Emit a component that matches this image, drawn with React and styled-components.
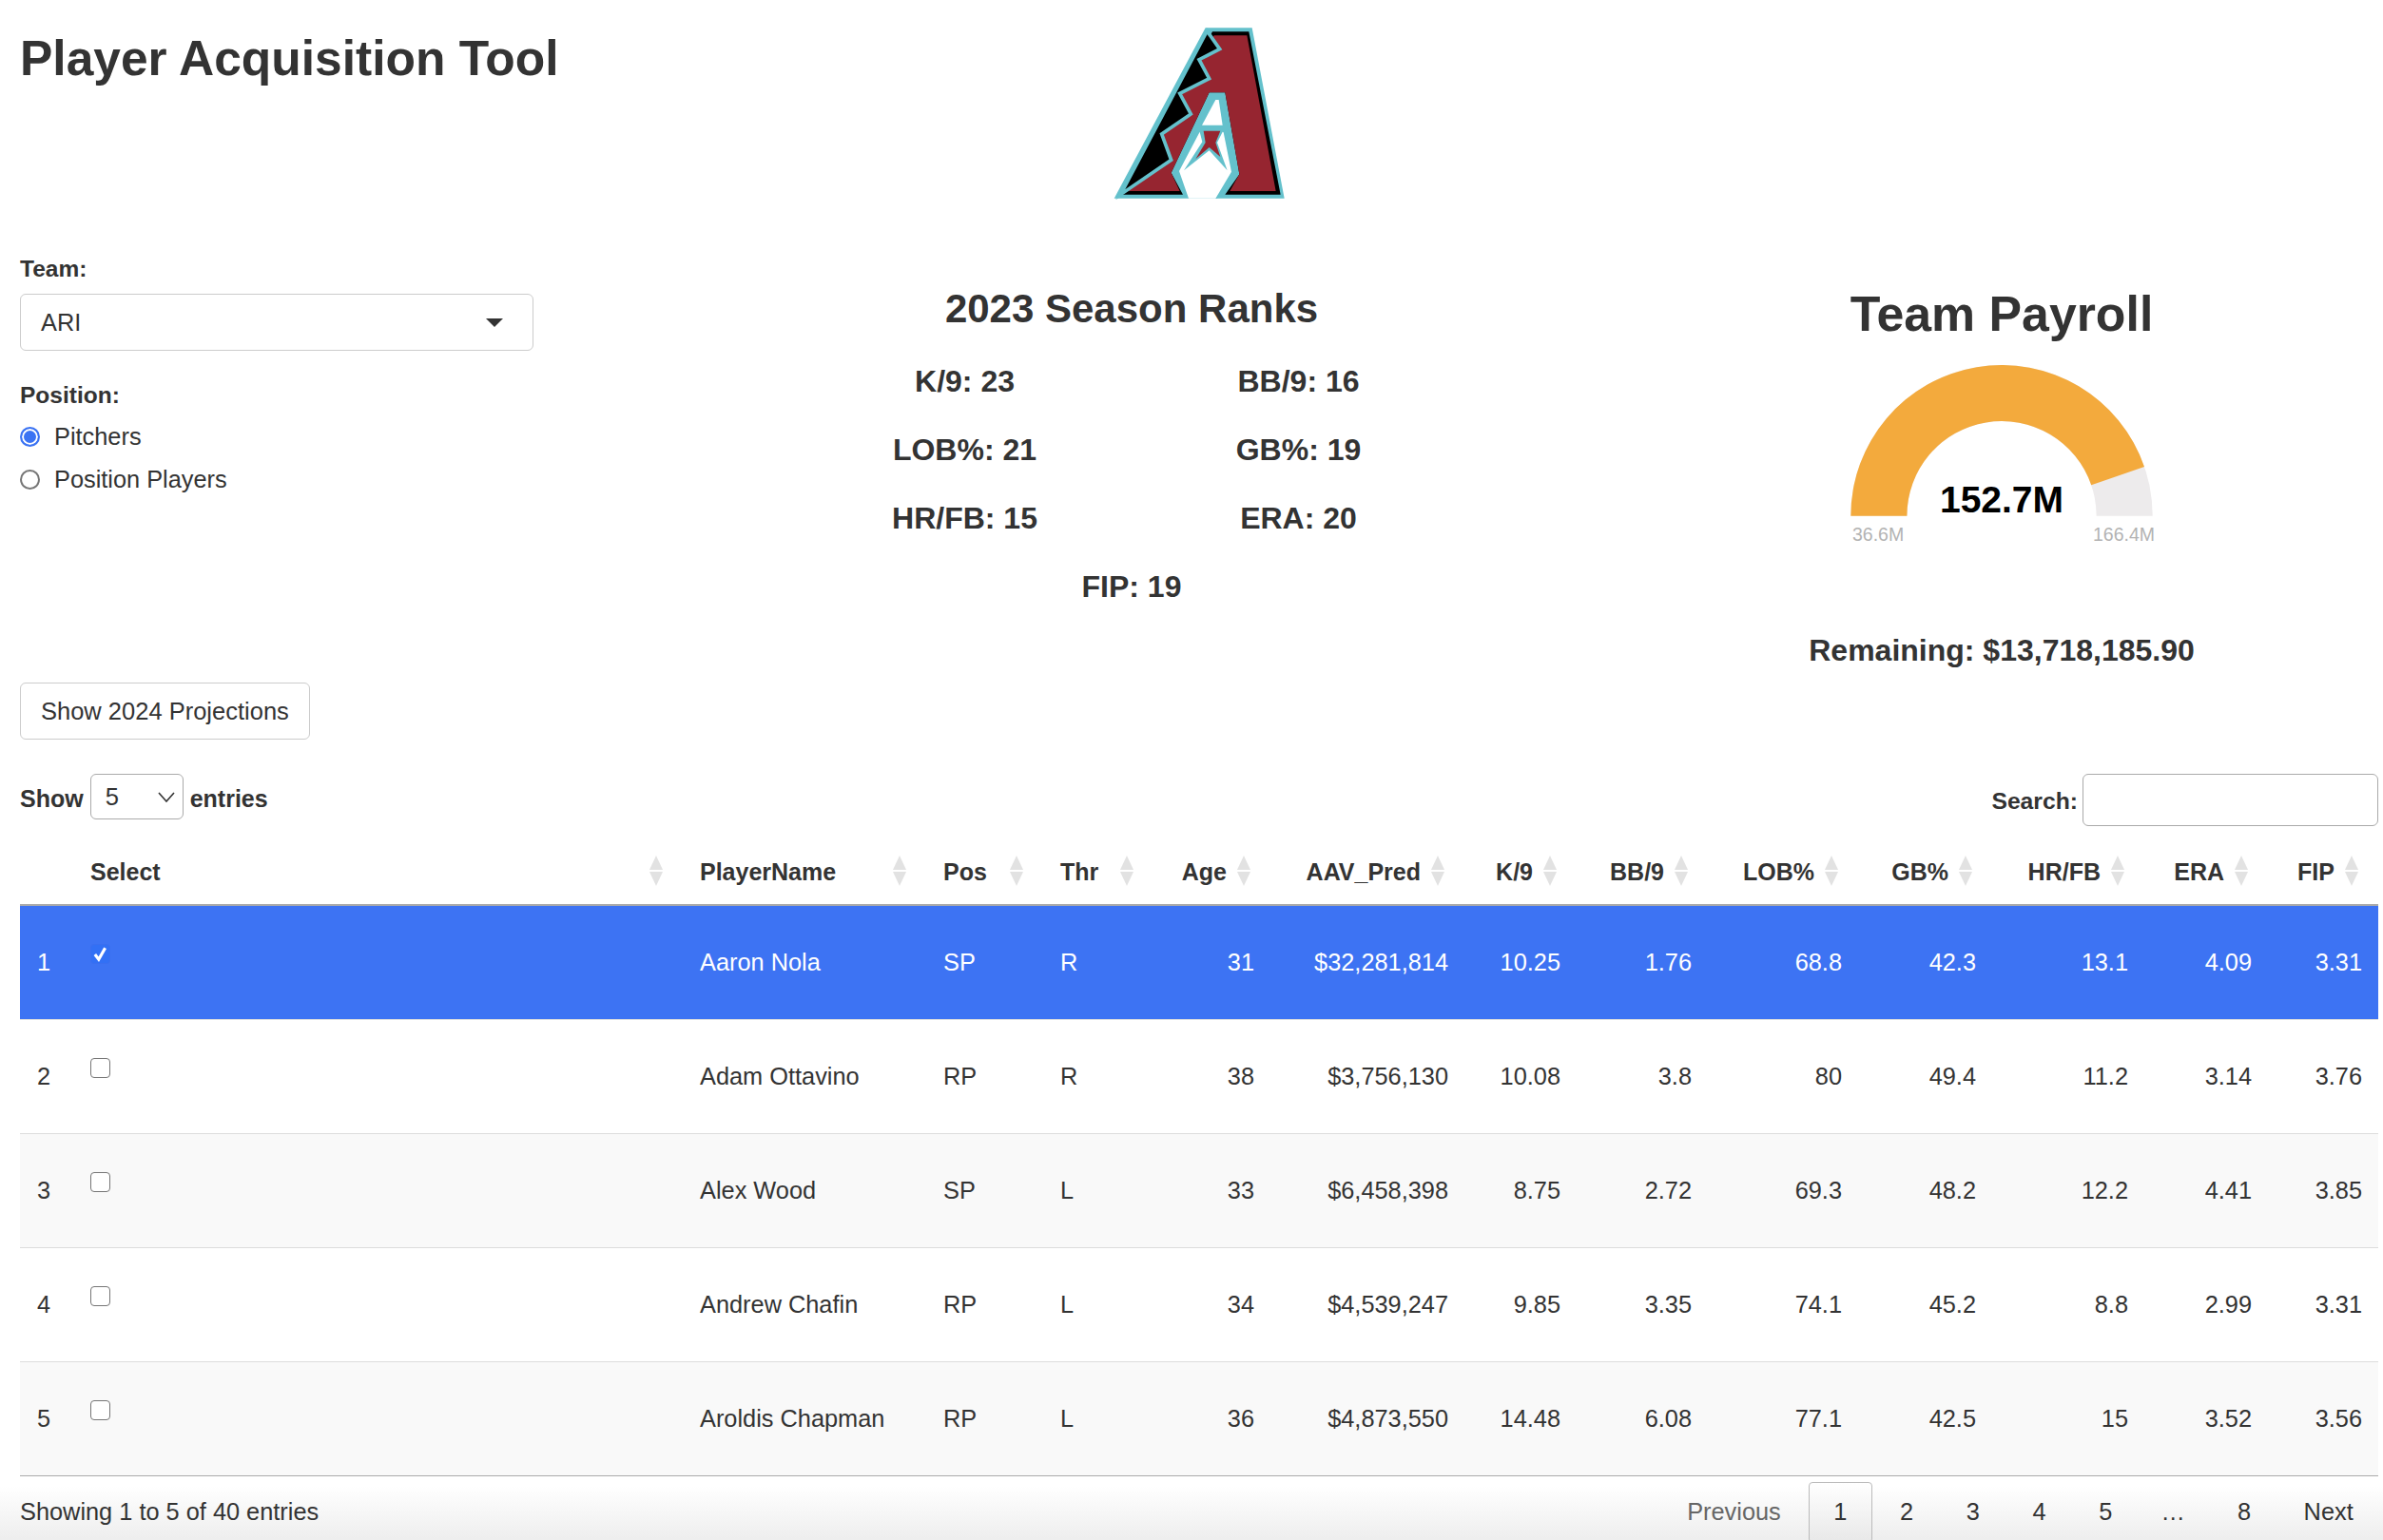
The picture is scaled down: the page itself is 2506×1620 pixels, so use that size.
import React from "react";
import styled, { createGlobalStyle } from "styled-components";

const GlobalStyle = createGlobalStyle`
  html, body {
    margin: 0;
    background: #fff;
    overflow: hidden;
  }
  body {
    font-family: "Liberation Sans", Arial, sans-serif;
    font-size: 25.35px;
    color: #333;
  }
  * { box-sizing: border-box; }
`;

const columns = [
  { key: "idx", label: "", width: 56 },
  { key: "select", label: "Select", width: 641, sort: true },
  { key: "name", label: "PlayerName", width: 256, sort: true },
  { key: "pos", label: "Pos", width: 123, sort: true },
  { key: "thr", label: "Thr", width: 116, sort: true },
  { key: "age", label: "Age", width: 123, sort: true, num: true },
  { key: "aav", label: "AAV_Pred", width: 204, sort: true, num: true },
  { key: "k9", label: "K/9", width: 118, sort: true, num: true },
  { key: "bb9", label: "BB/9", width: 138, sort: true, num: true },
  { key: "lob", label: "LOB%", width: 158, sort: true, num: true },
  { key: "gb", label: "GB%", width: 141, sort: true, num: true },
  { key: "hr", label: "HR/FB", width: 160, sort: true, num: true },
  { key: "era", label: "ERA", width: 130, sort: true, num: true },
  { key: "fip", label: "FIP", width: 116, sort: true, num: true },
];

const players = [
  { idx: 1, name: "Aaron Nola", pos: "SP", thr: "R", age: 31, aav: "$32,281,814", k9: "10.25", bb9: "1.76", lob: "68.8", gb: "42.3", hr: "13.1", era: "4.09", fip: "3.31", selected: true },
  { idx: 2, name: "Adam Ottavino", pos: "RP", thr: "R", age: 38, aav: "$3,756,130", k9: "10.08", bb9: "3.8", lob: "80", gb: "49.4", hr: "11.2", era: "3.14", fip: "3.76" },
  { idx: 3, name: "Alex Wood", pos: "SP", thr: "L", age: 33, aav: "$6,458,398", k9: "8.75", bb9: "2.72", lob: "69.3", gb: "48.2", hr: "12.2", era: "4.41", fip: "3.85" },
  { idx: 4, name: "Andrew Chafin", pos: "RP", thr: "L", age: 34, aav: "$4,539,247", k9: "9.85", bb9: "3.35", lob: "74.1", gb: "45.2", hr: "8.8", era: "2.99", fip: "3.31" },
  { idx: 5, name: "Aroldis Chapman", pos: "RP", thr: "L", age: 36, aav: "$4,873,550", k9: "14.48", bb9: "6.08", lob: "77.1", gb: "42.5", hr: "15", era: "3.52", fip: "3.56" },
];

const ranks = [
  ["K/9: 23", false],
  ["BB/9: 16", false],
  ["LOB%: 21", false],
  ["GB%: 19", false],
  ["HR/FB: 15", false],
  ["ERA: 20", false],
  ["FIP: 19", true],
];

const Page = styled.div`
  width: 2506px;
  height: 1620px;
  padding: 0 5px 0 21px;
  overflow: hidden;
`;

const Header = styled.header`
  display: flex;
  height: 230px;
`;

const Title = styled.h1`
  flex: 0 0 1099px;
  margin: 0;
  padding-top: 33px;
  font-size: 51.5px;
  line-height: 56px;
  font-weight: 700;
`;

const TopGrid = styled.section`
  display: grid;
  grid-template-columns: 818px 702px 1fr;
`;

const Sidebar = styled.div`
  padding-top: 38px;
  width: 540px;
`;

const FieldLabel = styled.div`
  font-size: 24.5px;
  font-weight: 700;
  line-height: 30px;
  margin-top: ${(p) => p.$top || 0}px;
`;

const TeamSelect = styled.div`
  height: 60px;
  margin-top: 11px;
  padding: 0 31px 0 21px;
  border: 1px solid #ccc;
  border-radius: 6px;
  display: flex;
  align-items: center;
  justify-content: space-between;
`;

const Caret = styled.span`
  width: 0;
  height: 0;
  border-left: 9px solid transparent;
  border-right: 9px solid transparent;
  border-top: 9px solid #333;
`;

const RadioRow = styled.label`
  display: flex;
  align-items: center;
  gap: 15px;
  height: 45px;
  margin-top: ${(p) => p.$top || 0}px;
`;

const RadioDot = styled.span`
  width: 21px;
  height: 21px;
  border-radius: 50%;
  border: 2px solid ${(p) => (p.$on ? "#3b73f3" : "#767676")};
  background: ${(p) => (p.$on ? "#3b73f3" : "#fff")};
  box-shadow: ${(p) => (p.$on ? "inset 0 0 0 2px #fff" : "none")};
`;

const Center = styled.div`
  padding-top: 70px;
  text-align: center;
`;

const SectionTitle = styled.h2`
  margin: 0;
  font-size: 42px;
  line-height: 50px;
  font-weight: 700;
`;

const RankGrid = styled.div`
  display: grid;
  grid-template-columns: 1fr 1fr;
  margin-top: 15px;
`;

const Rank = styled.div`
  font-size: 32px;
  font-weight: 700;
  line-height: 72px;
  grid-column: ${(p) => (p.$wide ? "1 / span 2" : "auto")};
`;

const PayrollCol = styled.div`
  padding: 70px 0 0 168px;
  display: flex;
  flex-direction: column;
  align-items: center;
`;

const PayrollTitle = styled.h2`
  margin: 0;
  font-size: 51.8px;
  line-height: 60px;
  font-weight: 700;
`;

const Gauge = styled.svg`
  display: block;
  margin-top: 10px;
  font-family: "Liberation Sans", Arial, sans-serif;
`;

const Remaining = styled.div`
  margin-top: 84px;
  font-size: 32px;
  line-height: 40px;
  font-weight: 700;
`;

const ProjectionButton = styled.button`
  display: block;
  width: 305px;
  height: 60px;
  margin-top: 14px;
  padding: 1px 0 0 21px;
  text-align: left;
  border: 1px solid #ccc;
  border-radius: 6px;
  background: #fff;
  color: #333;
  font: inherit;
  font-size: 25.5px;
`;

const Toolbar = styled.div`
  display: flex;
  justify-content: space-between;
  align-items: flex-start;
  margin-top: 36px;
`;

const LengthControl = styled.div`
  display: flex;
  align-items: center;
  gap: 7px;
  height: 52px;
  font-size: 25px;
  font-weight: 700;
`;

const LengthSelect = styled.div`
  align-self: flex-start;
  width: 98px;
  height: 48px;
  padding: 0 8px 0 15px;
  display: flex;
  align-items: center;
  justify-content: space-between;
  border: 1px solid #aaa;
  border-radius: 6px;
  font-size: 25.6px;
  font-weight: 400;
`;

const SearchControl = styled.div`
  display: flex;
  align-items: center;
  gap: 5px;
  font-size: 24.7px;
  font-weight: 700;
`;

const SearchLabel = styled.span`
  padding-top: 2px;
`;

const SearchInput = styled.input`
  width: 311px;
  height: 55px;
  border: 1px solid #aaa;
  border-radius: 6px;
  background: #fff;
`;

const Table = styled.table`
  width: 2480px;
  table-layout: fixed;
  border-collapse: collapse;
  border-spacing: 0;
`;

const Col = styled.col`
  width: ${(p) => p.$w}px;
`;

const Th = styled.th`
  position: relative;
  height: 83px;
  padding: 0 ${(p) => (p.$num ? 46 : 17)}px 19px 18px;
  vertical-align: bottom;
  text-align: ${(p) => (p.$num ? "right" : "left")};
  font-size: 25px;
  line-height: 30px;
  font-weight: 700;
  border-bottom: 2px solid #aaa;
  white-space: nowrap;
`;

const SortIcon = styled.svg`
  position: absolute;
  top: 31px;
  right: 21px;
`;

const Row = styled.tr`
  height: 120px;
  background: ${(p) => (p.$selected ? "#3d73f3" : p.$striped ? "#f9f9f9" : "#fff")};
  color: ${(p) => (p.$selected ? "#fff" : "#333")};
`;

const Td = styled.td`
  padding: 0 17px 0 18px;
  vertical-align: middle;
  text-align: ${(p) => (p.$num ? "right" : "left")};
  line-height: 30px;
  white-space: nowrap;
  border-bottom: 1px solid ${(p) => (p.$last ? "#aaa" : "#ddd")};
`;

const CheckCell = styled.div`
  padding-bottom: 18px;
  display: flex;
`;

const CheckBox = styled.span`
  width: 21px;
  height: 21px;
  border-radius: 4px;
  display: flex;
  align-items: center;
  justify-content: center;
  border: ${(p) => (p.$on ? "1px solid #3a6ff0" : "1.5px solid #767676")};
  background: ${(p) => (p.$on ? "#3270f5" : "#fff")};
`;

const Footer = styled.div`
  display: flex;
  justify-content: space-between;
  align-items: flex-start;
  height: 69px;
  margin: 0 -5px 0 -21px;
  padding: 6px 5px 0 21px;
  background: linear-gradient(to bottom, #fff 0%, #fff 15%, #ededed 100%);
`;

const Info = styled.div`
  padding-top: 13px;
  line-height: 36px;
`;

const Pagination = styled.div`
  display: flex;
  gap: 3px;
`;

const PageButton = styled.span`
  height: 64px;
  padding: 0 25.3px;
  display: flex;
  align-items: center;
  border: 1px solid ${(p) => (p.$active ? "#bbb" : "transparent")};
  border-radius: 4px;
  color: ${(p) => (p.$muted ? "#666" : "#333")};
  background: ${(p) => (p.$active ? "linear-gradient(to bottom, #fff 0%, #e8e8e8 100%)" : "transparent")};
`;

const Ellipsis = styled.span`
  width: 73px;
  height: 64px;
  padding-right: 4px;
  display: flex;
  align-items: center;
  justify-content: center;
`;

function Logo() {
  return (
    <svg width="260" height="230" viewBox="0 0 780 690">
      <path fill="#64c1cc" d="M155 626 443 88H590L692 626H475L430 560 388 626Z" />
      <path fill="#000" d="M465 100H580L680 614H505L550 550 505 292H455L335 545 372 614H175Z" />
      <path fill="#962530" d="M470 112H574L665 603H520L550 550 505 292H455L335 545 362 603H190Z" />
      <path
        fill="#000"
        stroke="#64c1cc"
        strokeWidth="11"
        strokeMiterlimit="6"
        d="M448 98 488 155 423 188 455 248 362 295 397 360 305 423 335 505 175 614Z"
      />
      <path fill="#64c1cc" d="M465 305H495L537 545 480 626H388L348 542Z" />
      <path fill="#fff" d="M475 315H485L497 395H432Z" />
      <path
        fill="#fff"
        d="M425 416 433 448 375 538 455 475 512 538 480 450 497 416 500 418 525 542 475 626H390L360 540Z"
      />
      <path fill="#962530" d="M437 413H490L475 450 490 495 455 465 412 502 443 450Z" />
    </svg>
  );
}

function SortCarets() {
  return (
    <SortIcon width="14" height="32" viewBox="0 0 14 32">
      <path fill="#e2e2e2" d="M7 0 14 15H0Z" />
      <path fill="#e2e2e2" d="M0 17H14L7 32Z" />
    </SortIcon>
  );
}

function PayrollGauge() {
  return (
    <Gauge width="340" height="210" viewBox="0 0 340 210">
      <path
        fill="#edebec"
        d="M11.3 172.7A158.7 158.7 0 0 1 328.7 172.7H269.6A99.6 99.6 0 0 0 70.4 172.7Z"
      />
      <path
        fill="#f3aa3d"
        d="M11.3 172.7A158.7 158.7 0 0 1 320 120.9L264.2 140.3A99.6 99.6 0 0 0 70.4 172.7Z"
      />
      <text x="170" y="169" textAnchor="middle" fontSize="39" fontWeight="700" fill="#000">
        152.7M
      </text>
      <text x="13" y="199" fontSize="19.5" fill="#b3b3b3">
        36.6M
      </text>
      <text x="331" y="199" textAnchor="end" fontSize="19.5" fill="#b3b3b3">
        166.4M
      </text>
    </Gauge>
  );
}

function App() {
  return (
    <Page>
      <GlobalStyle />
      <Header>
        <Title>Player Acquisition Tool</Title>
        <Logo />
      </Header>

      <TopGrid>
        <Sidebar>
          <FieldLabel>Team:</FieldLabel>
          <TeamSelect>
            ARI
            <Caret />
          </TeamSelect>
          <FieldLabel $top={32}>Position:</FieldLabel>
          <RadioRow $top={6}>
            <RadioDot $on />
            Pitchers
          </RadioRow>
          <RadioRow>
            <RadioDot />
            Position Players
          </RadioRow>
        </Sidebar>

        <Center>
          <SectionTitle>2023 Season Ranks</SectionTitle>
          <RankGrid>
            {ranks.map(([text, wide]) => (
              <Rank key={text} $wide={wide}>
                {text}
              </Rank>
            ))}
          </RankGrid>
        </Center>

        <PayrollCol>
          <PayrollTitle>Team Payroll</PayrollTitle>
          <PayrollGauge />
          <Remaining>Remaining: $13,718,185.90</Remaining>
        </PayrollCol>
      </TopGrid>

      <ProjectionButton>Show 2024 Projections</ProjectionButton>

      <Toolbar>
        <LengthControl>
          Show
          <LengthSelect>
            5
            <svg width="18" height="11" viewBox="0 0 18 11">
              <path d="M1 1 9 10 17 1" fill="none" stroke="#333" strokeWidth="1.6" />
            </svg>
          </LengthSelect>
          entries
        </LengthControl>
        <SearchControl>
          <SearchLabel>Search:</SearchLabel>
          <SearchInput type="text" />
        </SearchControl>
      </Toolbar>

      <Table>
        <colgroup>
          {columns.map((c) => (
            <Col key={c.key} $w={c.width} />
          ))}
        </colgroup>
        <thead>
          <tr>
            {columns.map((c) => (
              <Th key={c.key} $num={c.num}>
                {c.label}
                {c.sort && <SortCarets />}
              </Th>
            ))}
          </tr>
        </thead>
        <tbody>
          {players.map((p, i) => (
            <Row key={p.idx} $selected={p.selected} $striped={i % 2 === 0}>
              {columns.map((c) => (
                <Td key={c.key} $num={c.num} $last={i === players.length - 1}>
                  {c.key === "select" ? (
                    <CheckCell>
                      <CheckBox $on={p.selected}>
                        {p.selected && (
                          <svg width="17" height="17" viewBox="0 0 15 15">
                            <path d="M2.5 8 6 12.5 12 2" fill="none" stroke="#fff" strokeWidth="2.8" />
                          </svg>
                        )}
                      </CheckBox>
                    </CheckCell>
                  ) : (
                    p[c.key]
                  )}
                </Td>
              ))}
            </Row>
          ))}
        </tbody>
      </Table>

      <Footer>
        <Info>Showing 1 to 5 of 40 entries</Info>
        <Pagination>
          <PageButton $muted>Previous</PageButton>
          <PageButton $active>1</PageButton>
          <PageButton>2</PageButton>
          <PageButton>3</PageButton>
          <PageButton>4</PageButton>
          <PageButton>5</PageButton>
          <Ellipsis>…</Ellipsis>
          <PageButton>8</PageButton>
          <PageButton>Next</PageButton>
        </Pagination>
      </Footer>
    </Page>
  );
}

export default App;
